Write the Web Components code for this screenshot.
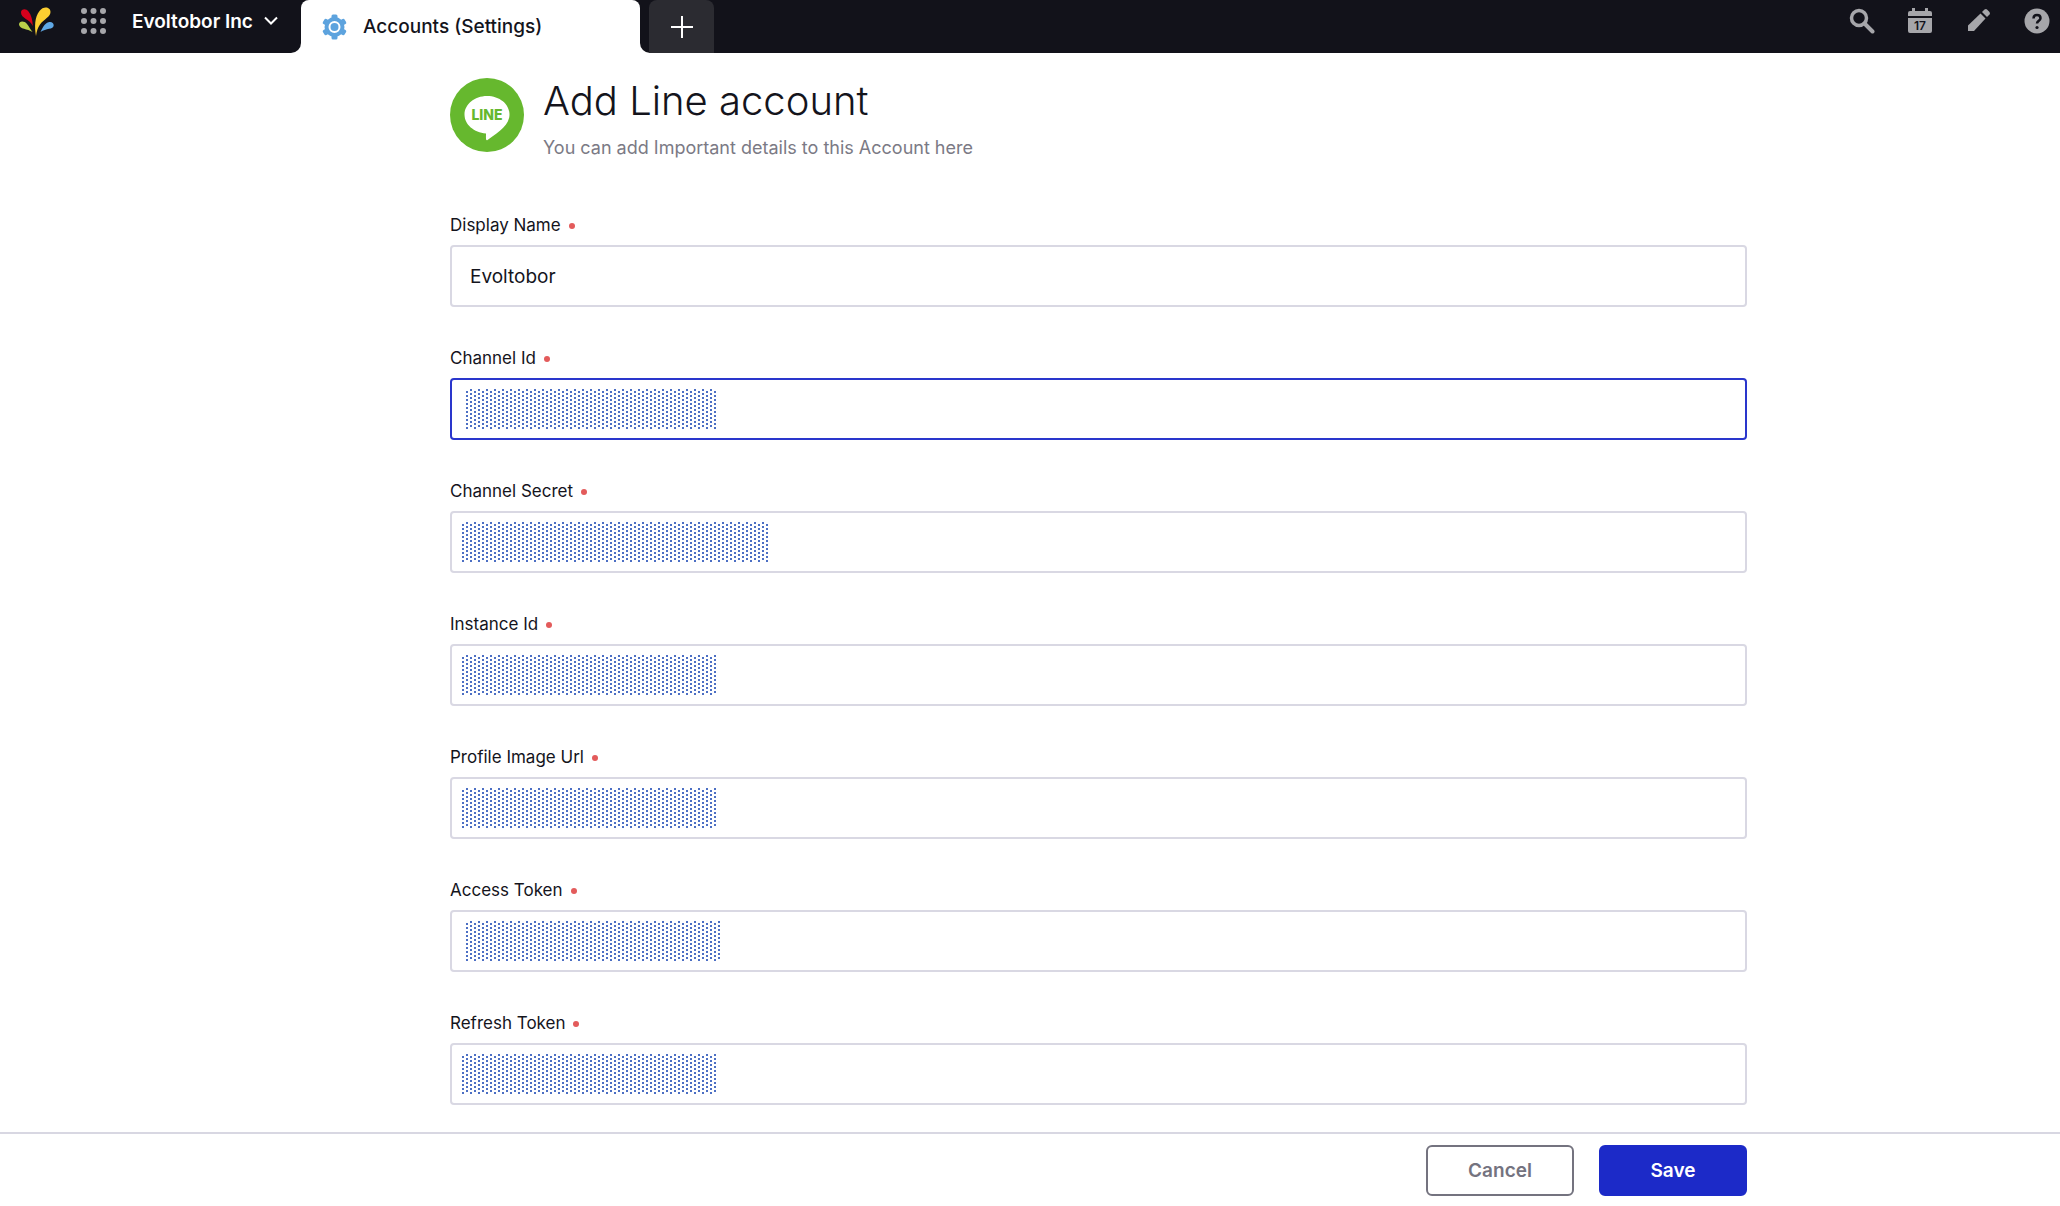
<!DOCTYPE html>
<html lang="en">
<head>
<meta charset="utf-8">
<title>Accounts (Settings)</title>
<style>
  body {
    margin: 0;
    background: #fff;
    color: #14141c;
    font-family: Inter, "Liberation Sans", sans-serif;
  }
</style>
</head>
<body>
<settings-page>
  <top-bar slot="top" workspace="Evoltobor Inc" tab="Accounts (Settings)"></top-bar>
  <account-header heading="Add Line account">You can add Important details to this Account here</account-header>
  <form-field name="display-name" label="Display Name" value="Evoltobor"></form-field>
  <form-field name="channel-id" label="Channel Id" masked="short" active></form-field>
  <form-field name="channel-secret" label="Channel Secret" masked="long"></form-field>
  <form-field name="instance-id" label="Instance Id" masked></form-field>
  <form-field name="profile-image" label="Profile Image Url" masked></form-field>
  <form-field name="access-token" label="Access Token" masked="indent"></form-field>
  <form-field name="refresh-token" label="Refresh Token" masked></form-field>
  <action-button slot="actions">Cancel</action-button>
  <action-button slot="actions" primary>Save</action-button>
</settings-page>

<script>
function attach(el, html) {
  const tempt = document.createElement("template");
  tempt.innerHTML = html;
  el.attachShadow({ mode: "open" });
  el.shadowRoot.appendChild(tempt.content.cloneNode(true));
}

class SettingsPage extends HTMLElement {
  constructor() {
    super();
    attach(this, `
      <style>
        :host {
          display: flex;
          flex-direction: column;
          min-height: 100vh;
        }
        main, footer {
          display: grid;
          grid-template-columns: 450fr 1297fr 313fr;
        }
        main {
          flex: 1;
          padding: 25px 0 27px;
        }
        .form {
          grid-column: 2;
          display: flex;
          flex-direction: column;
          gap: 39px;
        }
        footer {
          position: sticky;
          bottom: 0;
          background: #fff;
          border-top: 2px solid #d8d7e2;
          padding: 11px 0 10px;
        }
        .actions {
          grid-column: 2;
          display: flex;
          justify-content: flex-end;
          gap: 25px;
        }
      </style>
      <slot name="top"></slot>
      <main><div class="form"><slot></slot></div></main>
      <footer><div class="actions"><slot name="actions"></slot></div></footer>
    `);
  }
}

class TopBar extends HTMLElement {
  constructor() {
    super();
    attach(this, `
      <style>
        :host {
          display: flex;
          height: 53px;
          background: #fff;
        }
        button {
          border: 0;
          padding: 0;
          background: none;
          color: inherit;
          font: inherit;
          display: flex;
          align-items: center;
        }
        svg {
          display: block;
        }
        .left, .right {
          display: flex;
          box-sizing: border-box;
          background: #12121a;
        }
        .left {
          width: 301px;
          padding: 0 0 11px 18px;
          align-items: center;
          border-bottom-right-radius: 10px;
        }
        .apps {
          margin-left: 26px;
        }
        .workspace {
          margin-left: 26px;
          gap: 11px;
          color: #fff;
          font-size: 19px;
          font-weight: 600;
          white-space: nowrap;
        }
        .tab {
          width: 339px;
          background: #12121a;
        }
        .tab a {
          display: flex;
          align-items: center;
          gap: 16px;
          height: 53px;
          box-sizing: border-box;
          padding-left: 21px;
          background: #fff;
          border-radius: 8px 8px 0 0;
          color: #14141c;
          text-decoration: none;
          font-size: 19px;
          font-weight: 500;
        }
        .right {
          flex: 1;
          padding-left: 9px;
          border-bottom-left-radius: 10px;
        }
        .add {
          width: 65px;
          justify-content: center;
          background: #2b2b31;
          border-radius: 8px 8px 0 0;
        }
        .tools {
          display: flex;
          align-items: center;
          margin-left: auto;
          padding: 0 10px 11px 0;
          gap: 33px;
          color: #a6a6aa;
        }
      </style>
      <div class="left">
        <svg width="36" height="32" viewBox="0 0 36 32">
          <path fill="#d6001c" d="M3 7.500C3 4 8 3 10.500 6.500 13.500 10.500 14.500 15 14.800 21 12 14 3 13.500 3 7.500z"/>
          <path fill="#fccf31" d="M18 31C16.500 22 16.500 12 21.500 6c4-5.500 11-4 11 1 0 5-6.500 7-10.500 12.500-2.300 3.200-3.200 6.500-4 11.500z"/>
          <path fill="#b9d04a" d="M1 19.500C1 16 6 15.500 9 19c2 2.400 3 5 5.500 8C9.500 23.500 1.500 24.500 1 19.500z"/>
          <path fill="#5fa8e6" d="M22.500 27c2-4 4-8.500 8-9.700 3-.8 5.200.7 5.200 3C35.500 25 28 23 22.500 27z"/>
        </svg>
        <button class="apps" aria-label="Apps">
          <svg width="26" height="26" fill="#a6a6aa">
            <circle cx="4" cy="3" r="3"/><circle cx="13.500" cy="3" r="3"/><circle cx="23" cy="3" r="3"/>
            <circle cx="4" cy="13" r="3"/><circle cx="13.500" cy="13" r="3"/><circle cx="23" cy="13" r="3"/>
            <circle cx="4" cy="23" r="3"/><circle cx="13.500" cy="23" r="3"/><circle cx="23" cy="23" r="3"/>
          </svg>
        </button>
        <button class="workspace">
          <span id="workspace"></span>
          <svg width="14" height="10" fill="none" stroke="#fff" stroke-width="2"><path d="M1 1.500l6 6 6-6"/></svg>
        </button>
      </div>
      <div class="tab">
        <a href="#accounts">
          <svg width="25" height="26" viewBox="0 0 25 26" fill="#5da3de">
            <circle cx="12.500" cy="13" r="10"/>
            <rect id="teeth" x="9.500" y="0.500" width="6" height="25" rx="1.500"/>
            <rect x="9.500" y="0.500" width="6" height="25" rx="1.500" transform="rotate(60 12.500 13)"/>
            <rect x="9.500" y="0.500" width="6" height="25" rx="1.500" transform="rotate(120 12.500 13)"/>
            <circle cx="12.500" cy="13" r="5" stroke="#fff" stroke-width="2"/>
          </svg>
          <span id="tab"></span>
        </a>
      </div>
      <div class="right">
        <button class="add" aria-label="New tab">
          <svg width="22" height="22" stroke="#fff" stroke-width="2"><path d="M11 0v22M0 11h22"/></svg>
        </button>
        <div class="tools">
          <button aria-label="Search">
            <svg width="26" height="26" fill="none" stroke="currentColor">
              <circle cx="10" cy="10" r="7.500" stroke-width="3.500"/>
              <path d="M15.500 15.500l8 8" stroke-width="4" stroke-linecap="round"/>
            </svg>
          </button>
          <button aria-label="Calendar">
            <svg width="24" height="26" fill="currentColor">
              <path d="M0 8V5q0-2 2-2h2V0h3v3h10V0h3v3h2q2 0 2 2v3zM0 10h24v13q0 2-2 2H2q-2 0-2-2z"/>
              <text x="12" y="22" text-anchor="middle" font-size="12" font-weight="600" fill="#12121a">17</text>
            </svg>
          </button>
          <button aria-label="Compose">
            <svg width="26" height="26" fill="currentColor">
              <path d="M3 23v-5.500L15.500 5.500l5 5L9 23z"/>
              <path d="M17 4l2.500-2.500q1.500-1 2.500 0L24.500 4q1 1.500 0 2.500L22 9z"/>
            </svg>
          </button>
          <button aria-label="Help">
            <svg width="26" height="26">
              <circle cx="13" cy="13" r="12.500" fill="currentColor"/>
              <path d="M9.500 10.500Q9.500 7 13 7t3.500 3.200c0 2.300-3.500 2.800-3.500 5.300" fill="none" stroke="#12121a" stroke-width="2.500"/>
              <circle cx="13" cy="19.500" r="1.600" fill="#12121a"/>
            </svg>
          </button>
        </div>
      </div>
    `);
  }

  connectedCallback() {
    this.shadowRoot.getElementById("workspace").textContent = this.getAttribute("workspace");
    this.shadowRoot.getElementById("tab").textContent = this.getAttribute("tab");
  }
}

class AccountHeader extends HTMLElement {
  constructor() {
    super();
    attach(this, `
      <style>
        :host {
          display: flex;
          align-items: flex-start;
          gap: 19px;
          margin-bottom: 14px;
        }
        h1 {
          margin: 0 0 12px;
          font-size: 40px;
          font-weight: 300;
          line-height: 46px;
        }
        p {
          margin: 0;
          color: #7b7a85;
          font-size: 18px;
          line-height: 24px;
        }
      </style>
      <svg width="74" height="74">
        <circle cx="37" cy="37" r="37" fill="#66b82e"/>
        <path fill="#fff" d="M37 18c12.500 0 22.500 8 22.500 18.500 0 10-9.500 17-22 25.500-2 1-1.500-2.500-1.500-6.500-12-1-21.500-9-21.500-19S24.500 18 37 18z"/>
        <text x="37" y="42" text-anchor="middle" font-size="14" font-weight="800" fill="#66b82e">LINE</text>
      </svg>
      <div>
        <h1></h1>
        <p><slot></slot></p>
      </div>
    `);
  }

  connectedCallback() {
    this.shadowRoot.querySelector("h1").textContent = this.getAttribute("heading");
  }
}

class FormField extends HTMLElement {
  constructor() {
    super();
    attach(this, `
      <style>
        :host {
          display: block;
        }
        label {
          display: flex;
          align-items: center;
          gap: 8px;
          margin-bottom: 8px;
          font-size: 17px;
          line-height: 24px;
        }
        label::after {
          content: "";
          width: 6px;
          height: 6px;
          margin-top: 2px;
          border-radius: 50%;
          background: #e35b5b;
        }
        .box {
          display: grid;
          align-items: center;
        }
        .box > * {
          grid-area: 1 / 1;
        }
        input {
          box-sizing: border-box;
          width: 100%;
          height: 62px;
          padding: 0 18px;
          border: 2px solid #d9d8e3;
          border-radius: 4px;
          outline: 0;
          background: #fff;
          color: inherit;
          font: inherit;
          font-size: 19px;
        }
        :host([active]) input {
          border-color: #2a36cc;
        }
        /* dot screen over hidden values */
        .mask {
          display: none;
          width: 254px;
          height: 40px;
          margin-left: 12px;
          pointer-events: none;
          background:
            conic-gradient(at 2px 2px, transparent 270deg, #4c6fc4 0) 0 2px / 8px 4px,
            conic-gradient(at 2px 2px, transparent 270deg, #4c6fc4 0) 4px 0 / 8px 4px;
        }
        :host([masked]) .mask {
          display: block;
        }
        :host([masked="short"]) .mask {
          width: 250px;
          margin-left: 16px;
        }
        :host([masked="indent"]) .mask {
          margin-left: 16px;
        }
        :host([masked="long"]) .mask {
          width: 306px;
        }
      </style>
      <label for="field"></label>
      <div class="box">
        <input id="field" type="text">
        <div class="mask"></div>
      </div>
    `);
  }

  connectedCallback() {
    const input = this.shadowRoot.querySelector("input");
    this.shadowRoot.querySelector("label").textContent = this.getAttribute("label");
    input.name = this.getAttribute("name");
    input.value = this.getAttribute("value") || "";
    input.required = true;
  }
}

class ActionButton extends HTMLElement {
  constructor() {
    super();
    attach(this, `
      <style>
        :host {
          display: block;
        }
        button {
          box-sizing: border-box;
          width: 148px;
          height: 51px;
          border: 2px solid #74737f;
          border-radius: 6px;
          background: #fff;
          color: #74737f;
          font: inherit;
          font-size: 19px;
          font-weight: 600;
        }
        :host([primary]) button {
          border-color: #1c2ac8;
          background: #1c2ac8;
          color: #fff;
        }
      </style>
      <button type="button"><slot></slot></button>
    `);
  }
}

customElements.define("settings-page", SettingsPage);
customElements.define("top-bar", TopBar);
customElements.define("account-header", AccountHeader);
customElements.define("form-field", FormField);
customElements.define("action-button", ActionButton);
</script>
</body>
</html>
